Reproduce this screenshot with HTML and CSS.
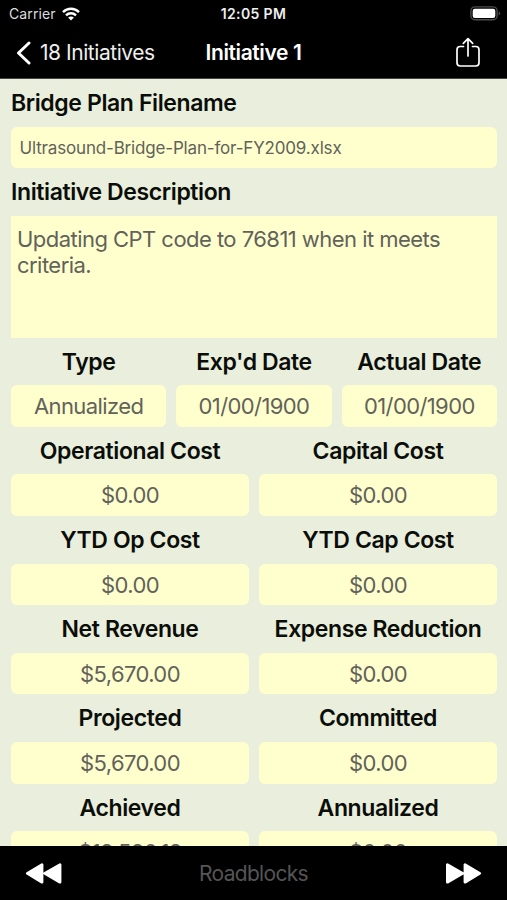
FILE: index.html
```html
<!DOCTYPE html>
<html lang="en">
<head>
<meta charset="utf-8">
<title>Initiative 1</title>
<link rel="stylesheet" href="styles.css">
</head>
<body>
<div class="screen">
  <header>
    <div class="status">
      <div class="carrier"><span>Carrier</span>
        <svg width="18" height="14" viewBox="0 0 18 14" fill="none" stroke="#fff" stroke-width="2.4"><path d="M1 5.1C5.5.7 12.5.7 17 5.1M4 8.3c2.8-2.8 7.2-2.8 10 0"/><path d="M9 13.5 6.1 10.6c1.6-1.5 4.2-1.5 5.8 0Z" fill="#fff" stroke="none"/></svg>
      </div>
      <div class="time">12:05 PM</div>
      <svg class="battery" width="31" height="15" viewBox="0 0 31 15"><rect x=".9" y=".9" width="26.2" height="12.8" rx="4" fill="none" stroke="#4c4c4c" stroke-width="1.4"/><rect x="2.7" y="2.7" width="22.6" height="9.2" rx="2.2" fill="#fff"/><path d="M28.7 5.2c2 .8 2 3.6 0 4.4Z" fill="#4c4c4c"/></svg>
    </div>
    <nav>
      <div class="back">
        <svg width="16" height="24" viewBox="0 0 16 24" fill="none" stroke="#fff" stroke-width="3" stroke-linecap="round" stroke-linejoin="round"><path d="M14 2 3.5 12 14 22"/></svg>
        <span>18 Initiatives</span>
      </div>
      <h1>Initiative 1</h1>
      <svg class="share" width="26" height="32" viewBox="0 0 26 32" fill="none" stroke="#fff" stroke-width="1.7" stroke-linecap="round" stroke-linejoin="round"><path d="M8.5 9.5H5.2A3.2 3.2 0 0 0 2 12.7v13.1A3.2 3.2 0 0 0 5.2 29h15.6a3.2 3.2 0 0 0 3.2-3.2V12.7a3.2 3.2 0 0 0-3.2-3.2h-3.3M13 19V2M8.3 6.3 13 1.6l4.7 4.7"/></svg>
    </nav>
  </header>
  <main>
    <h2 class="left">Bridge Plan Filename</h2>
    <div class="field filename">Ultrasound-Bridge-Plan-for-FY2009.xlsx</div>
    <h2 class="left">Initiative Description</h2>
    <div class="description">Updating CPT code to 76811 when it meets criteria.</div>
    <div class="row three">
      <section><h2>Type</h2><div class="field">Annualized</div></section>
      <section><h2>Exp'd Date</h2><div class="field">01/00/1900</div></section>
      <section><h2>Actual Date</h2><div class="field">01/00/1900</div></section>
    </div>
    <div class="row">
      <section><h2>Operational Cost</h2><div class="field">$0.00</div></section>
      <section><h2>Capital Cost</h2><div class="field">$0.00</div></section>
      <section><h2>YTD Op Cost</h2><div class="field">$0.00</div></section>
      <section><h2>YTD Cap Cost</h2><div class="field">$0.00</div></section>
      <section><h2>Net Revenue</h2><div class="field">$5,670.00</div></section>
      <section><h2>Expense Reduction</h2><div class="field">$0.00</div></section>
      <section><h2>Projected</h2><div class="field">$5,670.00</div></section>
      <section><h2>Committed</h2><div class="field">$0.00</div></section>
      <section><h2>Achieved</h2><div class="field">$18,580.18</div></section>
      <section><h2>Annualized</h2><div class="field">$0.00</div></section>
    </div>
  </main>
  <footer>
    <svg width="38" height="24" viewBox="0 0 38 24" fill="#fff" stroke="#fff" stroke-width="2.8" stroke-linejoin="round"><path d="M18 3.6v17.6L3.3 12.4ZM36 3.6v17.6L20.7 12.4Z"/></svg>
    <span>Roadblocks</span>
    <svg width="38" height="24" viewBox="0 0 38 24" fill="#fff" stroke="#fff" stroke-width="2.8" stroke-linejoin="round"><path d="M2.4 3.6v17.6l15.3-8.8ZM20 3.6v17.6l14.7-8.8Z"/></svg>
  </footer>
</div>
</body>
</html>
```
FILE: styles.css
```css
* { box-sizing: border-box; }
body { margin: 0; font-family: Inter, "Liberation Sans", sans-serif; }
.screen { width: 507px; height: 900px; display: flex; flex-direction: column; overflow: hidden; background: #e9eedd; }
svg { display: block; flex: none; }
header { height: 79px; flex: none; background: #000; color: #fff; border-bottom: 1px solid #444; }
.status { height: 27px; display: grid; grid-template-columns: 1fr auto 1fr; align-items: center; padding: 0 6px 0 9px; font-size: 14px; }
.carrier { display: flex; align-items: center; gap: 6px; letter-spacing: 0.1px; color: #ddd; }
.time { margin-right: 3px; font-weight: 600; font-size: 14px; letter-spacing: 0.35px; color: #eee; }
.battery { justify-self: end; }
nav { height: 51px; display: grid; grid-template-columns: 1fr auto 1fr; align-items: center; padding: 0 26px 0 15px; }
.back { display: flex; align-items: center; gap: 9px; font-size: 21px; letter-spacing: -0.45px; color: #eee; }
h1 { margin: 0 0 0 11px; font-size: 21px; font-weight: 600; letter-spacing: -0.4px; }
.share { justify-self: end; }
main { flex: 1; min-height: 0; overflow: hidden; padding: 0 10px 0 11px; }
h2 { margin: 0; height: 47.5px; line-height: 49px; font-size: 23px; font-weight: 600; letter-spacing: -0.39px; text-align: center; color: #0b0d08; white-space: nowrap; }
h2.left { text-align: left; }
.field { height: 41.7px; line-height: 42px; border-radius: 6px; background: #ffffce; color: #62625a; font-size: 22px; letter-spacing: -0.6px; text-align: center; white-space: nowrap; }
.three .field { line-height: 43px; }
.filename { padding-left: 8.5px; font-size: 17px; line-height: 43px; letter-spacing: -0.17px; text-align: left; }
.description { height: 122px; padding: 10px 6px; background: #ffffce; color: #62625a; font-size: 22px; line-height: 26px; letter-spacing: -0.54px; }
.row { display: grid; grid-template-columns: 1fr 1fr; column-gap: 10px; }
.three { grid-template-columns: repeat(3, 1fr); }
footer { height: 54px; flex: none; display: flex; align-items: center; justify-content: space-between; padding: 0 24px; background: #000; color: #555; font-size: 21px; letter-spacing: -0.7px; }
```
